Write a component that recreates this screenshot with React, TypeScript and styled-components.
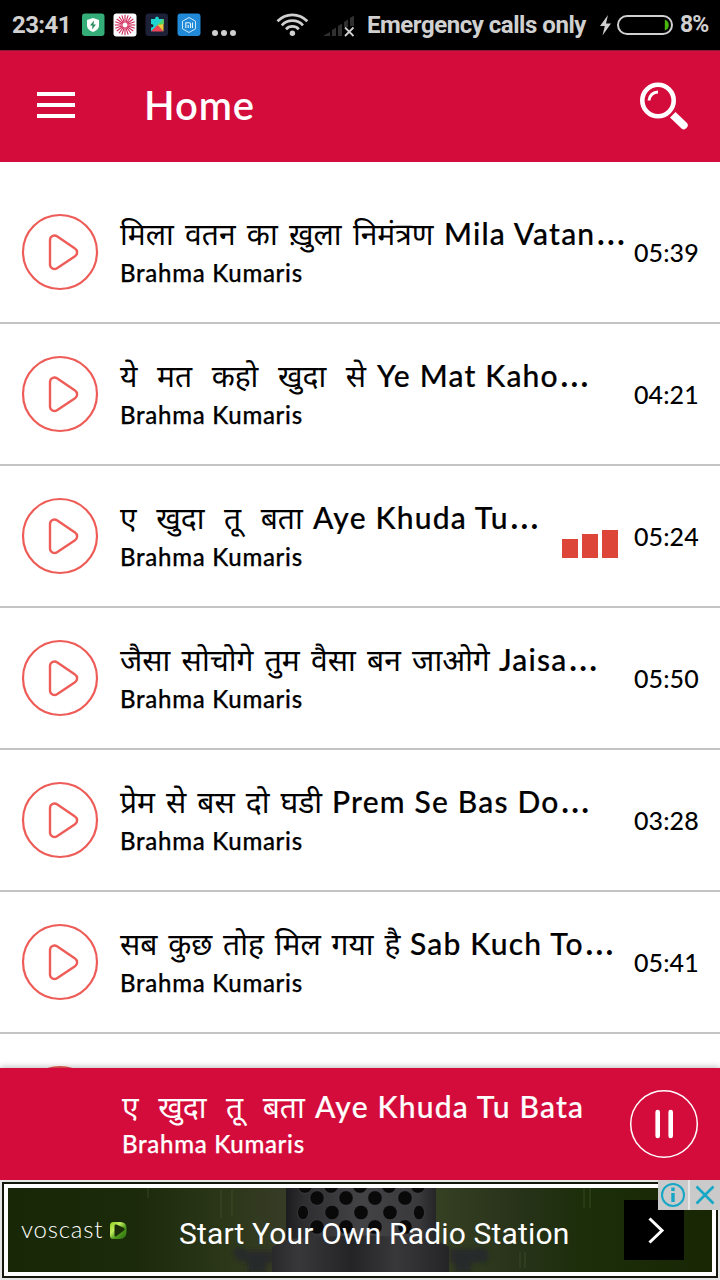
import React from 'react';
import styled, { createGlobalStyle } from 'styled-components';

const Global = createGlobalStyle`
  * { box-sizing: border-box; }
  html, body { margin: 0; padding: 0; background: #fff; }
  body { width: 720px; height: 1280px; overflow: hidden; font-family: Lato, "Noto Sans", sans-serif; }
`;

const Screen = styled.div`
  width: 720px;
  height: 1280px;
  display: flex;
  flex-direction: column;
  overflow: hidden;
  background: #fff;
`;

const StatusBar = styled.div`
  height: 50px;
  flex: none;
  display: flex;
  align-items: center;
  background: #000;
  color: #d0d0d0;
  font: 700 24px/54px Roboto, sans-serif;
  white-space: nowrap;
`;
const Clock = styled.span`width: 70px; margin-left: 12px; letter-spacing: -0.6px;`;
const StatusIcons = styled.svg`flex: none; display: block;`;
const Carrier = styled.span`width: 233px; margin-left: 12px; letter-spacing: -0.47px;`;
const Percent = styled.span`margin-left: 5px; font-size: 23px; letter-spacing: -1px;`;

const AppBar = styled.header`
  height: 112px;
  flex: none;
  display: flex;
  align-items: center;
  padding: 0 30px 4px 37px;
  background: #d40c3c;
  border-top: 1px solid #8c1838;
  color: #fff;
`;
const Heading = styled.h1`
  flex: 1;
  margin: 0 0 0 69px;
  font-size: 40px;
  font-weight: 600;
  line-height: 50px;
  letter-spacing: 0.9px;
`;

const List = styled.main`
  flex: 1;
  min-height: 0;
  overflow: hidden;
  padding-top: 20px;
`;
const Row = styled.div`
  height: 142px;
  display: flex;
  align-items: center;
  padding: 0 0 0 20px;
  border-bottom: 2px solid #c4c4c4;
  position: relative;
  color: #000;
`;
const SongText = styled.div`
  flex: 1;
  min-width: 0;
  margin-left: 20px;
  height: 140px;
  padding-top: 29px;
`;
const Title = styled.div`
  display: flex;
  align-items: baseline;
  gap: 9px;
  height: 46px;
  line-height: 44px;
  white-space: pre;
`;
const Hindi = styled.span<{ $w: number; $gap?: number }>`
  width: ${p => p.$w}px;
  flex: none;
  font-family: "Noto Sans", "Noto Sans Devanagari", sans-serif;
  font-size: 30px;
  word-spacing: ${p => p.$gap ?? 3.5}px;
`;
const Latin = styled.span`
  font-size: 30px;
  font-weight: 500;
  letter-spacing: 1.2px;
  -webkit-text-stroke: 0.2px currentColor;
`;
const Dots = styled.span`
  margin-left: 1px;
  font-size: 39px;
  font-weight: 400;
  line-height: 1;
  letter-spacing: 0;
  -webkit-text-stroke: 0;
`;
const Artist = styled.div`
  font-size: 24px;
  font-weight: 500;
  line-height: 32px;
  letter-spacing: 0.7px;
  -webkit-text-stroke: 0.25px currentColor;
`;
const Duration = styled.span`
  width: 86px;
  flex: none;
  padding-bottom: 1px;
  font-size: 25px;
  font-weight: 500;
  letter-spacing: 0.1px;
`;
const Equalizer = styled.div`
  position: absolute;
  left: 562px;
  bottom: 48px;
  display: flex;
  align-items: flex-end;
  gap: 4px;
`;
const Level = styled.i<{ $h: number }>`
  width: 16px;
  height: ${p => p.$h}px;
  background: #dd4538;
`;

const Player = styled.section`
  height: 112px;
  flex: none;
  display: flex;
  padding: 16px 20px 0 122px;
  background: #d40c3c;
  color: #fff;
  box-shadow: 0 0 7px rgba(0, 0, 0, 0.35);
  position: relative;
`;
const NowPlaying = styled.div`
  flex: 1;
  min-width: 0;
  ${Title} { height: 44px; }
`;
const PauseButton = styled.svg`flex: none; margin-top: 4px;`;

const Ad = styled.aside`
  height: 100px;
  flex: none;
  padding: 2px;
  background: #e6e6e6;
  position: relative;
`;
const AdFrame = styled.div`
  height: 96px;
  border: 2px solid #12180a;
  padding: 4px;
  background: #fff;
`;
const AdBody = styled.div`
  height: 84px;
  display: flex;
  align-items: center;
  position: relative;
  overflow: hidden;
  color: #fff;
  background: linear-gradient(90deg, #182806 0, #1b2a0a 18%, #2c3719 31%, #363b25 39%, #353f22 61%, #28331a 72%, #1c2e0a 82%, #182604 100%);
`;
const Backdrop = styled.svg`position: absolute; left: 0; top: 0;`;
const Brand = styled.div`
  position: relative;
  display: flex;
  align-items: center;
  width: 171px;
  padding-left: 13px;
  font: 300 24px/24px Lato, sans-serif;
  letter-spacing: 0.8px;
`;
const BrandName = styled.span`width: 89px; padding-bottom: 3px;`;
const AdCopy = styled.div`
  position: relative;
  flex: 1;
  font: 400 30px/40px Roboto, sans-serif;
  letter-spacing: 0.16px;
  padding-top: 7px;
  white-space: nowrap;
`;
const AdButton = styled.svg`
  position: relative;
  flex: none;
  margin-right: 28px;
  background: #000;
`;
const AdChoices = styled.div`
  position: absolute;
  right: 0;
  top: 0;
  display: flex;
  gap: 2px;
  background: #e6e6e6;
`;
const Chip = styled.svg`background: #cacaca; display: block;`;

const songs = [
  { hi: 'मिला वतन का ख़ुला निमंत्रण', en: 'Mila Vatan', w: 315, t: '05:39' },
  { hi: 'ये  मत  कहो  खुदा  से', en: 'Ye Mat Kaho', w: 248, gap: 2, t: '04:21' },
  { hi: 'ए  खुदा  तू  बता', en: 'Aye Khuda Tu', w: 184, gap: 2, t: '05:24', playing: true },
  { hi: 'जैसा सोचोगे तुम वैसा बन जाओगे', en: 'Jaisa', w: 370, t: '05:50' },
  { hi: 'प्रेम से बस दो घडी', en: 'Prem Se Bas Do', w: 203, gap: 3.2, t: '03:28' },
  { hi: 'सब कुछ तोह मिल गया है', en: 'Sab Kuch To', w: 281, gap: 3, t: '05:41' },
];

const PlayIcon = () => (
  <svg width="80" height="80" viewBox="0 0 80 80" fill="none" stroke="#ee5c58">
    <circle cx="40" cy="40" r="37" strokeWidth="2.2" />
    <path d="M30 28V52.500a4.500 4.500 0 0 0 7 3.700L55 44.200a4.500 4.500 0 0 0 0-7.600L37 24.300a4.500 4.500 0 0 0-7 3.700Z" strokeWidth="2.400" />
  </svg>
);

const rays = Array.from({ length: 20 }, (_, i) => i * 18);

const Notifications = () => (
  <StatusIcons width="273" height="50" viewBox="82 0 273 50">
    <rect x="82" y="13.500" width="22.500" height="22.500" rx="3" fill="#35ad78" />
    <path d="M93 18l6 2v5.500q0 4-6 6.500-6-2.500-6-6.500V20Z" fill="#fff" />
    <path d="M94 20.500l-4 5h2.500l-.5 4 4-5h-2.500Z" fill="#268c5c" />
    <rect x="113.500" y="13.500" width="23" height="23" rx="3" fill="#fff" />
    {rays.map(a => (
      <path key={a} d="M125 22.500V14.800" stroke="#d02558" strokeWidth="1.100" transform={`rotate(${a} 125 25)`} />
    ))}
    <rect x="145.500" y="13.500" width="22.500" height="22.500" rx="3" fill="#1d2138" />
    <path d="M151 19h4q0-2.500 2-2.500t2 2.500h4.500v5L157 26l-6 5.500v-4q2.500 0 2.500-1.800T151 24Z" fill="#20d4cf" />
    <path d="M151 31.500l6.500-6.500 6 6.500Z" fill="#ef4658" />
    <path d="M157.500 25l6-6v12.500Z" fill="#f3c63c" />
    <path d="M157.500 25l6-6v5Z" fill="#46d867" />
    <rect x="177.500" y="13.500" width="23" height="22.500" rx="3" fill="#2089d8" />
    <path d="M189 17.500l6.500 3.700v7.600L189 32.500l-6.500-3.700v-7.600Z" fill="none" stroke="#cfe9ff" strokeWidth="1" />
    <path d="M185.800 28v-5.300h3.400q1.300 0 1.300 1.300v4M188.200 25v3M192.500 22.500V28" fill="none" stroke="#e4f4ff" strokeWidth="1.100" />
    <g fill="#d0d0d0">
      <circle cx="215" cy="33" r="3" /><circle cx="224" cy="33" r="3" /><circle cx="233" cy="33" r="3" />
    </g>
    <g fill="none" stroke="#d0d0d0" strokeWidth="2.700">
      <path d="M277.500 21.300a20.500 20.500 0 0 1 29.800 0" />
      <path d="M281.800 25.300a14.500 14.500 0 0 1 21.200 0" />
      <path d="M286 29.200a8.800 8.800 0 0 1 12.800 0" />
    </g>
    <circle cx="292.400" cy="33.200" r="2.700" fill="#d0d0d0" />
    <path d="M323 36l7-4v4ZM332 30l4-2.500V36h-4ZM338 26l4-2.500V36h-4ZM344 22l4-2.500V27h-4ZM350 18l4-2.500V26h-4Z" fill="#303030" />
    <path d="M345 27.500l8.500 8.500M353.500 27.500L345 36" stroke="#d0d0d0" strokeWidth="1.800" />
  </StatusIcons>
);

const Battery = () => (
  <StatusIcons width="75" height="50" viewBox="600 0 75 50">
    <path d="M608 15l-8 11h4.800l-2.300 9.500 8.500-12h-5Z" fill="#d0d0d0" />
    <path d="M664.800 19.500q4 1.500 4 5.500t-4 5.500Z" fill="#48b80c" />
    <rect x="618" y="16" width="54" height="18" rx="9" fill="none" stroke="#d0d0d0" strokeWidth="2" />
  </StatusIcons>
);

const SearchIcon = () => (
  <svg width="52" height="52" viewBox="638 78.500 52 52" fill="none" stroke="#fff">
    <circle cx="658" cy="100" r="15.700" strokeWidth="4.600" />
    <path d="M649 100a9 9 0 0 1 9-8.500" strokeWidth="3" />
    <path d="M670 117l5.500-5.500 11.500 11q2 2.500-.5 5-2.500 2.500-5 .5Z" fill="#fff" stroke="none" />
  </svg>
);

const holes = [
  [305, 1186], [331, 1186], [360, 1186], [389, 1186], [418, 1186],
  [317, 1198], [346, 1198], [375, 1198], [405, 1198],
  [303, 1212.500], [332, 1212.500], [361, 1212.500], [390, 1212.500], [419, 1212.500],
  [317, 1227], [346, 1227], [375, 1227], [405, 1227],
];

const Microphone = () => (
  <Backdrop width="704" height="84" viewBox="8 1188 704 84">
    <defs>
      <linearGradient id="grille" x1="0" x2="1">
        <stop offset="0" stopColor="#1c1c1e" /><stop offset=".12" stopColor="#2e2e30" />
        <stop offset=".5" stopColor="#434346" /><stop offset=".88" stopColor="#3a3a3d" /><stop offset="1" stopColor="#252527" />
      </linearGradient>
      <linearGradient id="body" x1="0" x2="1">
        <stop offset="0" stopColor="#29292b" /><stop offset=".15" stopColor="#38383a" />
        <stop offset=".45" stopColor="#242426" /><stop offset=".7" stopColor="#38383b" /><stop offset="1" stopColor="#252527" />
      </linearGradient>
      <filter id="soft"><feGaussianBlur stdDeviation="2" /></filter>
    </defs>
    <path d="M148 1188v10M221 1190v28M232 1190v26M584 1188v20M590 1188v20M520 1252v16M525 1252v16" stroke="#4a5530" strokeOpacity=".3" strokeWidth="2" />
    <g fill="#25292a" filter="url(#soft)">
      <path d="M232 1250l9-3 6 4h26v12h-7v9h-18v-10l-10-2ZM450 1249h24l8-2 7 6-2 9-16 1v9h-16v-9h-5Z" />
    </g>
    <path d="M286 1188h150v54H286Z" fill="url(#grille)" />
    {holes.map(([x, y]) => {
      const edge = (x < 310 || x > 415) && y > 1205;
      return <ellipse key={`${x}-${y}`} cx={x} cy={y} rx={edge ? 5.5 : 7.2} ry="7.300" fill="#09090a" stroke="#4c4c4f" strokeWidth=".6" />;
    })}
    <path d="M288 1239q73-7 147 0l14 8v25H272v-25Z" fill="url(#body)" />
  </Backdrop>
);

const BrandMark = () => (
  <svg width="17" height="17" viewBox="0 0 17 17">
    <defs>
      <linearGradient id="leaf" x1="0" y1="0" x2="1" y2="1">
        <stop offset="0" stopColor="#8fd020" /><stop offset=".35" stopColor="#c0ec5c" />
        <stop offset=".6" stopColor="#4f9a1c" /><stop offset="1" stopColor="#2f6c12" />
      </linearGradient>
    </defs>
    <path d="M3.500 0H10q6.500 0 6.500 6v4q0 7-7 7H3.500Q0 17 0 13.500v-10Q0 0 3.500 0Z" fill="url(#leaf)" />
    <path d="M4.500 3.800q0-1.800 2-1.200l6.500 3q3 1.400.5 3.200l-7 5.200q-2 1.200-2-1Z" fill="#1a2c08" />
  </svg>
);

export default function App() {
  return (
    <Screen>
      <Global />
      <StatusBar>
        <Clock>23:41</Clock>
        <Notifications />
        <Carrier>Emergency calls only</Carrier>
        <Battery />
        <Percent>8%</Percent>
      </StatusBar>
      <AppBar>
        <svg width="38" height="28" fill="#fff"><path d="M0 1h38v4H0zM0 12h38v4H0zM0 23h38v4H0z" /></svg>
        <Heading>Home</Heading>
        <SearchIcon />
      </AppBar>
      <List>
        {songs.map(s => (
          <Row key={s.t}>
            <PlayIcon />
            <SongText>
              <Title>
                <Hindi $w={s.w} $gap={s.gap}>{s.hi}</Hindi>
                <Latin>{s.en}<Dots>…</Dots></Latin>
              </Title>
              <Artist>Brahma Kumaris</Artist>
            </SongText>
            {s.playing && <Equalizer><Level $h={19} /><Level $h={24} /><Level $h={28} /></Equalizer>}
            <Duration>{s.t}</Duration>
          </Row>
        ))}
        <Row><PlayIcon /></Row>
      </List>
      <Player>
        <NowPlaying>
          <Title><Hindi $w={184} $gap={2}>ए  खुदा  तू  बता</Hindi><Latin>Aye Khuda Tu Bata</Latin></Title>
          <Artist>Brahma Kumaris</Artist>
        </NowPlaying>
        <PauseButton width="72" height="72" viewBox="0 0 72 72" fill="none" stroke="#fff">
          <circle cx="36" cy="36" r="33.300" strokeWidth="1.500" />
          <path d="M29.700 24v24M42.700 24v24" strokeWidth="4.600" strokeLinecap="round" />
        </PauseButton>
      </Player>
      <Ad>
        <AdFrame>
          <AdBody>
            <Microphone />
            <Brand>
              <BrandName>voscast</BrandName>
              <BrandMark />
            </Brand>
            <AdCopy>Start Your Own Radio Station</AdCopy>
            <AdButton width="60" height="60" viewBox="0 0 60 60" fill="none" stroke="#fff" strokeWidth="3">
              <path d="M25.500 18.500L38 30.500 25.500 42.500" />
            </AdButton>
          </AdBody>
        </AdFrame>
        <AdChoices>
          <Chip width="30" height="30" viewBox="0 0 30 30" fill="none" stroke="#16a6c6">
            <circle cx="15" cy="15" r="11" strokeWidth="2" />
            <path d="M15 13v9M15 7.500v3.500" strokeWidth="3.400" />
          </Chip>
          <Chip width="30" height="30" viewBox="0 0 30 30" fill="none" stroke="#16a6c6" strokeWidth="2.600">
            <path d="M6.500 6.500l17 17M23.500 6.500l-17 17" />
          </Chip>
        </AdChoices>
      </Ad>
    </Screen>
  );
}
